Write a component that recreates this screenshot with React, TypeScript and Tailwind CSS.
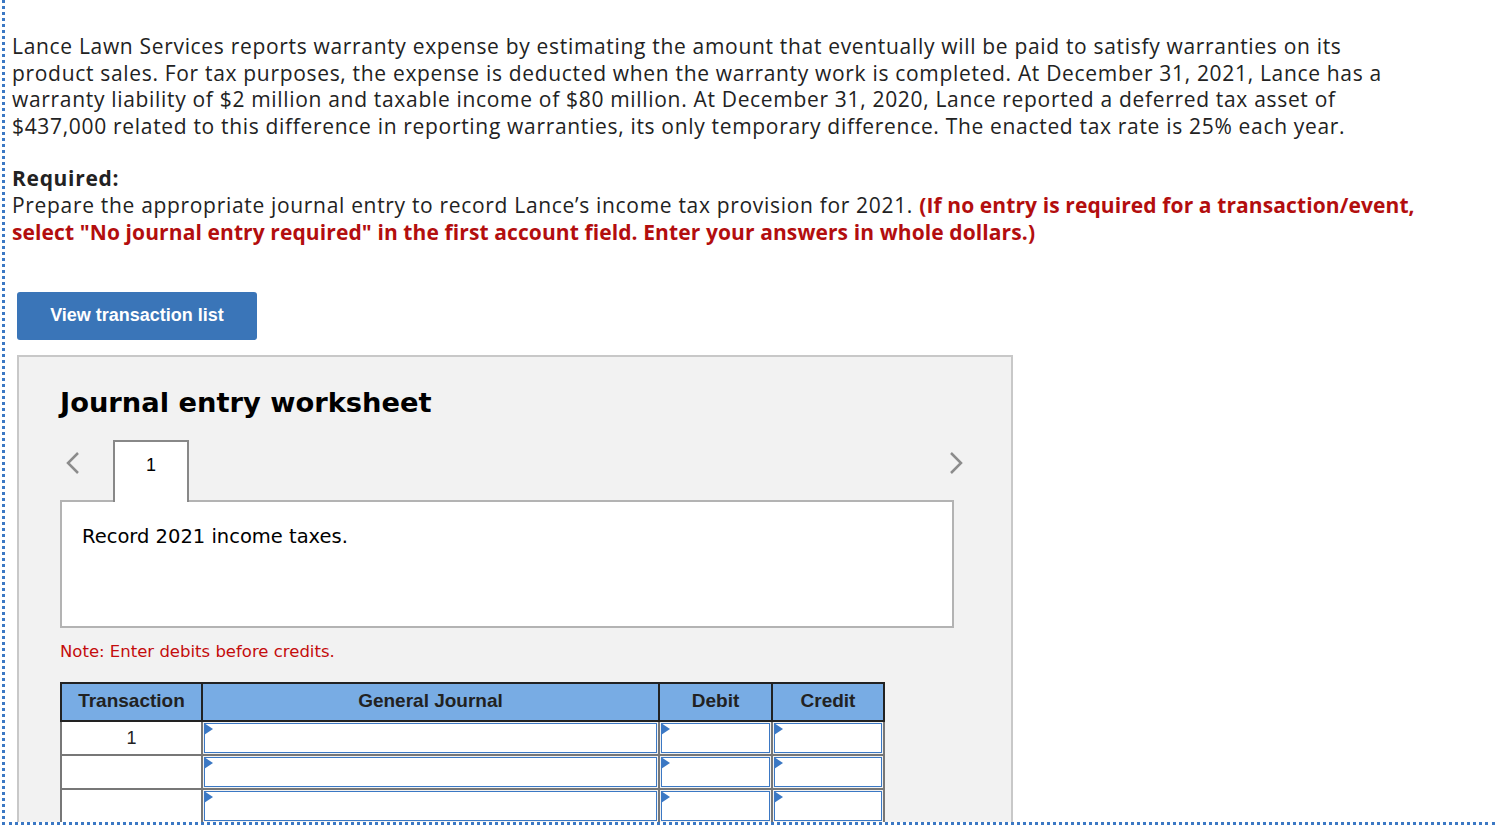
import React from 'react';

const body = { fontFamily: '"Open Sans", "Liberation Sans", sans-serif' };

function Chevron({ dir }: { dir: 'left' | 'right' }) {
  return (
    <svg width="16" height="24" viewBox="0 0 16 24" fill="none">
      <path
        d={dir === 'left' ? 'M13 2 L3 12 L13 22' : 'M3 2 L13 12 L3 22'}
        stroke="#8c8c8c"
        strokeWidth="2.5"
      />
    </svg>
  );
}

function InputCell() {
  return (
    <td className="relative h-[34px] border-2 border-[#777] p-0">
      <div className="absolute inset-[1px] border border-[#3b78c4] bg-white" />
      <svg className="absolute left-[1px] top-[1px]" width="9" height="12" viewBox="0 0 9 12">
        <path d="M0 0 L9 6 L0 12 Z" fill="#3b78c4" />
      </svg>
    </td>
  );
}

export default function App() {
  return (
    <div className="h-[827px] overflow-hidden bg-white">
      <div className="ml-[2px] h-[825px] overflow-hidden border-b-[3px] border-l-[3px] border-dotted border-[#3b78c4] pl-[7px] pt-[33px]">
        <div style={body} className="text-[21px] leading-[26.5px] tracking-[0.68px] text-[#222]">
          <p className="whitespace-nowrap">
            Lance Lawn Services reports warranty expense by estimating the amount that eventually will be paid to satisfy warranties on its
            <br />
            product sales. For tax purposes, the expense is deducted when the warranty work is completed. At December 31, 2021, Lance has a
            <br />
            warranty liability of $2 million and taxable income of $80 million. At December 31, 2020, Lance reported a deferred tax asset of
            <br />
            $437,000 related to this difference in reporting warranties, its only temporary difference. The enacted tax rate is 25% each year.
          </p>
          <p className="mt-[26px] font-bold">Required:</p>
          <p className="whitespace-nowrap leading-[27px]">
            Prepare the appropriate journal entry to record Lance’s income tax provision for 2021.{' '}
            <span className="font-bold tracking-[0.1px] text-[#b30e0e]">
              (If no entry is required for a transaction/event,
              <br />
              select "No journal entry required" in the first account field. Enter your answers in whole dollars.)
            </span>
          </p>
        </div>

        <button
          className="ml-[5px] mt-[46px] h-[48px] w-[240px] rounded-[3px] bg-[#3a75b8] text-[18px] font-bold text-white"
          style={{ fontFamily: '"Liberation Sans", Arial, sans-serif' }}
        >
          View transaction list
        </button>

        <div className="ml-[5px] mt-[15px] w-[996px] border-2 border-[#c8c8c8] bg-[#f2f2f2] pb-10 pl-[41px] pt-[28px]">
          <h2
            className="text-[27.3px] font-bold leading-[36px] text-black"
            style={{ fontFamily: '"DejaVu Sans", Verdana, sans-serif' }}
          >
            Journal entry worksheet
          </h2>

          <div className="mt-[19px] flex w-[893px] items-end">
            <div className="mb-[25px] ml-[5px] w-[48px]">
              <Chevron dir="left" />
            </div>
            <div
              className="relative z-10 -mb-[2px] flex h-[62px] w-[76px] justify-center border-2 border-b-0 border-[#888] bg-white pt-[10px] text-[18px] text-black"
              style={{ fontFamily: '"Liberation Sans", Arial, sans-serif' }}
            >
              1
            </div>
            <div className="flex-1" />
            <div className="mb-[25px] mr-[-11px]">
              <Chevron dir="right" />
            </div>
          </div>

          <div
            className="h-[128px] w-[894px] border-2 border-[#b3b3b3] bg-white pl-[20px] pt-[20px] text-[19.5px] text-black"
            style={{ fontFamily: '"DejaVu Sans", Verdana, sans-serif' }}
          >
            Record 2021 income taxes.
          </div>

          <p
            className="mt-[12px] text-[16.5px] text-[#c40c0c]"
            style={{ fontFamily: '"DejaVu Sans", Verdana, sans-serif' }}
          >
            Note: Enter debits before credits.
          </p>

          <table
            className="mt-[18px] border-collapse text-[19px]"
            style={{ fontFamily: '"Liberation Sans", Arial, sans-serif' }}
          >
            <thead>
              <tr className="h-[38px] bg-[#78ace4] font-bold text-[#222]">
                <th className="w-[141px] border-2 border-[#222] pb-[2px] font-bold">Transaction</th>
                <th className="w-[457px] border-2 border-[#222] pb-[2px] font-bold">General Journal</th>
                <th className="w-[113px] border-2 border-[#222] pb-[2px] font-bold">Debit</th>
                <th className="w-[112px] border-2 border-[#222] pb-[2px] font-bold">Credit</th>
              </tr>
            </thead>
            <tbody>
              {['1', '', '', ''].map((t, i) => (
                <tr key={i}>
                  <td className="h-[34px] border-2 border-[#777] bg-white text-center text-[18px] text-[#222]">{t}</td>
                  <InputCell />
                  <InputCell />
                  <InputCell />
                </tr>
              ))}
            </tbody>
          </table>
        </div>
      </div>
    </div>
  );
}
